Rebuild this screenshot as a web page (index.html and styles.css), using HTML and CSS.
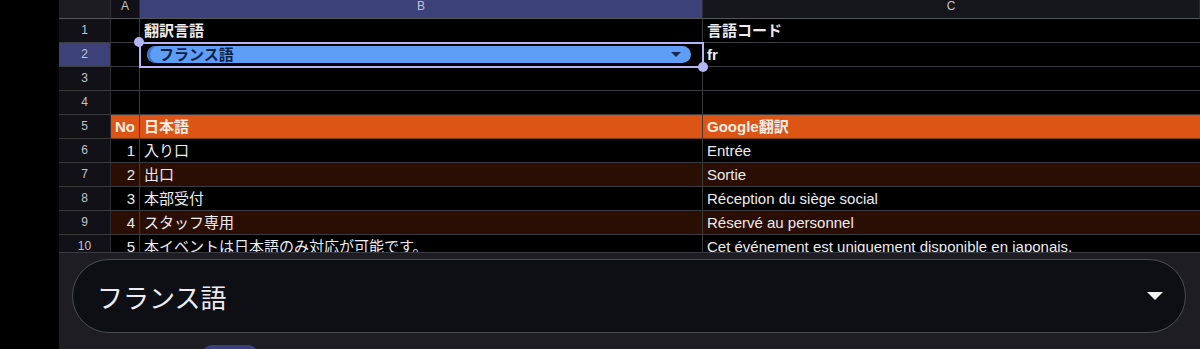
FILE: index.html
```html
<!DOCTYPE html>
<html lang="ja">
<head>
    <meta charset="UTF-8">
    <meta name="viewport" content="width=device-width, initial-scale=1.0">
    <title>翻訳シート</title>
    <link rel="stylesheet" href="styles.css">
</head>
<body>

    <div class="app">
        <div class="sheet">
            <div class="grid">
                <!-- column headers -->
                <div class="corner"></div>
                <div class="col-head">A</div>
                <div class="col-head active">B</div>
                <div class="col-head">C</div>

                <!-- row 1 -->
                <div class="row-head">1</div>
                <div class="cell"></div>
                <div class="cell bold">翻訳言語</div>
                <div class="cell bold">言語コード</div>

                <!-- row 2 -->
                <div class="row-head active">2</div>
                <div class="cell"></div>
                <div class="cell selected">
                    <span class="chip">フランス語<span class="chip-arrow"></span></span>
                    <span class="handle tl"></span>
                    <span class="handle br"></span>
                </div>
                <div class="cell bold">fr</div>

                <!-- rows 3, 4 -->
                <div class="row-head">3</div>
                <div class="cell"></div>
                <div class="cell"></div>
                <div class="cell"></div>
                <div class="row-head">4</div>
                <div class="cell"></div>
                <div class="cell"></div>
                <div class="cell"></div>

                <!-- table header -->
                <div class="row-head">5</div>
                <div class="cell head bold">No</div>
                <div class="cell head bold">日本語</div>
                <div class="cell head bold">Google翻訳</div>

                <div class="row-head">6</div>
                <div class="cell num">1</div>
                <div class="cell">入り口</div>
                <div class="cell">Entrée</div>

                <div class="row-head">7</div>
                <div class="cell num alt">2</div>
                <div class="cell alt">出口</div>
                <div class="cell alt">Sortie</div>

                <div class="row-head">8</div>
                <div class="cell num">3</div>
                <div class="cell">本部受付</div>
                <div class="cell">Réception du siège social</div>

                <div class="row-head">9</div>
                <div class="cell num alt">4</div>
                <div class="cell alt">スタッフ専用</div>
                <div class="cell alt">Réservé au personnel</div>

                <div class="row-head">10</div>
                <div class="cell num">5</div>
                <div class="cell">本イベントは日本語のみ対応が可能です。</div>
                <div class="cell">Cet événement est uniquement disponible en japonais.</div>
            </div>
        </div>

        <div class="picker-panel">
            <div class="picker">
                <span class="picker-value">フランス語</span>
                <svg class="picker-arrow" width="16" height="9" viewBox="0 0 16 9">
                    <path d="M0 0 L16 0 L8 8 Z" fill="#f2f2f5"/>
                </svg>
            </div>
            <div class="picker-foot">
                <span class="foot-tab"></span>
            </div>
        </div>
    </div>

</body>
</html>
```

FILE: styles.css
```css
:root {
    --bg: #000000;
    --grid-line: #3b3b40;
    --head-bg: #16161d;
    --head-line: #2c2c34;
    --head-text: #c4c4cc;
    --active-bg: #3d4179;
    --orange: #dd5514;
    --brown: #2a0e04;
    --select: #b2b6f6;
    --chip: #5f9ef6;
    --panel-bg: #1d1d23;
    --font: "Liberation Sans", "Noto Sans CJK JP", Arial, sans-serif;
}
body, html {
    margin: 0;
    background-color: var(--bg);
    font-family: var(--font);
    color: #ececf0;
}
.app {
    margin-left: 59px;
    height: 349px;
    display: flex;
    flex-direction: column;
    overflow: hidden;
}

/* --- HOJA --- */
.sheet {
    height: 252px;
    flex-shrink: 0;
    overflow: hidden;
}
.grid {
    display: grid;
    grid-template-columns: 52px 29px 563px 1fr;
    grid-template-rows: 19px;
    grid-auto-rows: 24px;
}
.corner, .col-head {
    background-color: var(--head-bg);
    border-right: 1px solid var(--head-line);
    border-bottom: 1px solid #55555c;
    font-size: 12px;
    line-height: 13px;
    text-align: center;
    color: var(--head-text);
}
.corner { background-color: #1c1c22; }
.col-head:nth-child(2) { background-color: #101016; }
.col-head.active { background-color: var(--active-bg); }
.col-head:last-child {
    text-align: left;
    padding-left: 1px;
    border-right: none;
}
.row-head {
    background-color: #111117;
    border-right: 1px solid var(--head-line);
    border-bottom: 1px solid var(--grid-line);
    font-size: 12px;
    line-height: 23px;
    text-align: center;
    color: var(--head-text);
}
.row-head.active { background-color: var(--active-bg); }
.cell {
    position: relative;
    border-right: 1px solid var(--grid-line);
    border-bottom: 1px solid var(--grid-line);
    padding: 1px 4px 0;
    font-size: 15px;
    line-height: 22px;
    white-space: nowrap;
    overflow: visible;
}
.cell:nth-child(4n) { border-right: none; }
.bold { font-weight: bold; }
.num { text-align: right; }
.alt { background-color: var(--brown); }
.head {
    background-color: var(--orange);
    color: #fbeee6;
    border-bottom-color: #7a3a18;
}
.cell.head.bold:nth-child(4n+2) { padding: 1px 3px 0 4px; }

/* --- SELECCIÓN --- */
.selected {
    outline: 2px solid var(--select);
    outline-offset: -1px;
    padding: 0 5px 0 7px;
    z-index: 2;
}
.chip {
    display: flex;
    align-items: center;
    margin-top: 3px;
    height: 17px;
    padding: 0 10px 0 12px;
    margin-right: 6px;
    border-radius: 9px;
    background-color: var(--chip);
    box-shadow: inset 3px 0 0 #3d73cc;
    color: #10203f;
    font-weight: bold;
    font-size: 15px;
    line-height: 17px;
}
.chip-arrow {
    margin-left: auto;
    width: 0;
    height: 0;
    border-left: 5px solid transparent;
    border-right: 5px solid transparent;
    border-top: 5px solid #1b2a4c;
}
.handle {
    position: absolute;
    width: 10px;
    height: 10px;
    border-radius: 50%;
    background-color: var(--select);
}
.handle.tl { left: -6px; top: -6px; }
.handle.br { right: -6px; bottom: -6px; }

/* --- PANEL INFERIOR --- */
.picker-panel {
    flex: 1;
    background-color: var(--panel-bg);
    border-top: 1px solid #3a3a42;
    padding: 6px 14px 0 13px;
}
.picker {
    height: 72px;
    display: flex;
    align-items: center;
    padding: 0 22px 0 24px;
    background-color: #0e0e15;
    border: 1px solid #4c4c54;
    border-radius: 37px;
}
.picker-value {
    font-size: 26px;
    color: #ececf2;
    font-family: "Noto Sans CJK JP", var(--font);
}
.picker-arrow { margin-left: auto; }
.picker-foot {
    padding: 12px 0 0 130px;
}
.foot-tab {
    display: block;
    width: 56px;
    height: 10px;
    border-radius: 10px 10px 0 0;
    background-color: #3b3f80;
}
```
